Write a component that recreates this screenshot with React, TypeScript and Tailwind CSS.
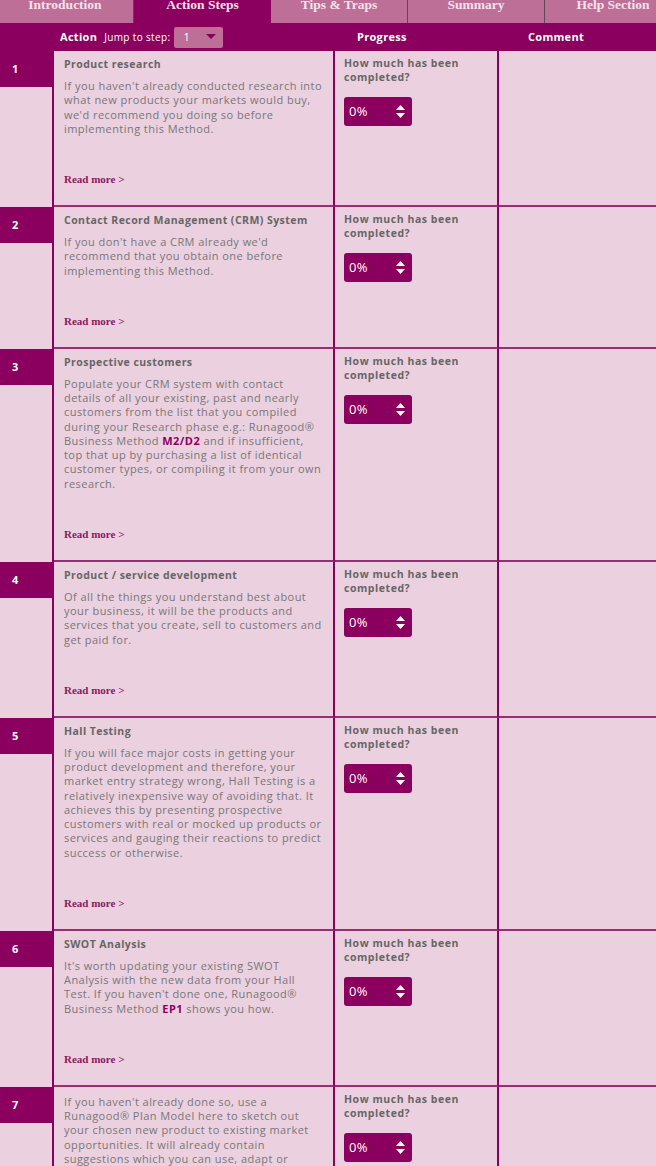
import React from 'react';

const tabs = ['Introduction', 'Action Steps', 'Tips & Traps', 'Summary', 'Help Section'];

type Step = { n: number; title: string; body: React.ReactNode };

const Em = ({ children }: { children: React.ReactNode }) => (
  <span className="font-bold text-[#8b005f]">{children}</span>
);

const steps: Step[] = [
  {
    n: 1,
    title: 'Product research',
    body: "If you haven't already conducted research into what new products your markets would buy, we'd recommend you doing so before implementing this Method.",
  },
  {
    n: 2,
    title: 'Contact Record Management (CRM) System',
    body: "If you don't have a CRM already we'd recommend that you obtain one before implementing this Method.",
  },
  {
    n: 3,
    title: 'Prospective customers',
    body: (
      <>
        Populate your CRM system with contact details of all your existing, past and nearly customers from the list
        that you compiled during your Research phase e.g.: Runagood® Business Method <Em>M2/D2</Em> and if
        insufficient, top that up by purchasing a list of identical customer types, or compiling it from your own
        research.
      </>
    ),
  },
  {
    n: 4,
    title: 'Product / service development',
    body: 'Of all the things you understand best about your business, it will be the products and services that you create, sell to customers and get paid for.',
  },
  {
    n: 5,
    title: 'Hall Testing',
    body: 'If you will face major costs in getting your product development and therefore, your market entry strategy wrong, Hall Testing is a relatively inexpensive way of avoiding that. It achieves this by presenting prospective customers with real or mocked up products or services and gauging their reactions to predict success or otherwise.',
  },
  {
    n: 6,
    title: 'SWOT Analysis',
    body: (
      <>
        It's worth updating your existing SWOT Analysis with the new data from your Hall Test. If you haven't done
        one, Runagood® Business Method <Em>EP1</Em> shows you how.
      </>
    ),
  },
  {
    n: 7,
    title: '',
    body: "If you haven't already done so, use a Runagood® Plan Model here to sketch out your chosen new product to existing market opportunities. It will already contain suggestions which you can use, adapt or replace.",
  },
];

function Spinner() {
  return (
    <div className="mt-[13px] flex h-[29px] w-[68px] items-center justify-between rounded-[3px] bg-[#8b005f] pl-[5px] pr-[6px]">
      <span className="text-[13px] leading-none tracking-[0.3px] text-white">0%</span>
      <svg width="11" height="17" viewBox="0 0 11 17">
        <polygon points="1,7 5.5,2 10,7" fill="white" />
        <polygon points="1,10 10,10 5.5,15" fill="white" />
      </svg>
    </div>
  );
}

function StepRow({ step }: { step: Step }) {
  return (
    <div className="flex">
      <div className="w-[54px] shrink-0 border-r-2 border-[#8b005f]">
        <div className="flex h-[36px] items-center bg-[#8b005f] pl-[12px] text-[11px] font-bold text-white">
          {step.n}
        </div>
      </div>
      <div className="w-[281px] shrink-0 border-b-2 border-r-2 border-r-[#8b005f] border-b-[#9a2c73] pb-[19px] pl-[10px] pr-[10px] pt-[6px]">
        {step.title ? (
          <div className="mb-[8px] text-[10.5px] font-bold leading-[14px] tracking-[0.45px] text-[#666]">
            {step.title}
          </div>
        ) : (
          <div className="h-[2px]" />
        )}
        <p className="text-[11px] leading-[14.25px] tracking-[0.45px] text-[#777]">{step.body}</p>
        <a className="mt-[36px] block font-['Liberation_Serif',serif] text-[11px] font-bold leading-[14px] text-[#8b1a60]">
          Read more &gt;
        </a>
      </div>
      <div className="w-[164px] shrink-0 border-b-2 border-r-2 border-r-[#8b005f] border-b-[#9a2c73] pl-[9px] pt-[5px]">
        <div className="text-[10.5px] font-bold leading-[14px] tracking-[0.55px] text-[#666]">
          How much has been
          <br />
          completed?
        </div>
        <Spinner />
      </div>
      <div className="flex-1 border-b-2 border-[#9a2c73]" />
    </div>
  );
}

export default function App() {
  return (
    <div className="min-h-screen overflow-hidden bg-[#ebd0df] font-['Open_Sans',sans-serif]">
      <nav className="-ml-[3px] flex h-[23px] bg-[#bd6f98]">
        {tabs.map((t, i) => (
          <div
            key={t}
            className={
              i === 1
                ? 'w-[137px] shrink-0 overflow-hidden bg-[#8b005f] text-center'
                : 'w-[137px] shrink-0 overflow-hidden border-r border-[#5a4a52] bg-[#bd6f98] text-center'
            }
          >
            <span className="-mt-[3px] block font-['Liberation_Serif',serif] text-[13.5px] font-bold leading-[16px] text-[#f5e1ec]">
              {t}
            </span>
          </div>
        ))}
      </nav>

      <header className="flex h-[28px] items-center bg-[#8b005f] text-white">
        <div className="w-[54px] shrink-0" />
        <div className="flex w-[281px] shrink-0 items-center pl-[6px]">
          <span className="text-[11px] font-bold tracking-[0.3px]">Action</span>
          <span className="ml-[7px] text-[10px] tracking-[0.35px]">Jump to step:</span>
          <div className="ml-[4px] flex h-[21px] w-[49px] items-center justify-between rounded-[2px] bg-[#bd6f98] pl-[9px] pr-[7px]">
            <span className="text-[11px] text-white">1</span>
            <svg width="10" height="6" viewBox="0 0 10 6">
              <polygon points="0,0 10,0 5,5" fill="#8b005f" />
            </svg>
          </div>
        </div>
        <div className="w-[164px] shrink-0 pl-[22px] text-[11px] font-bold tracking-[0.3px]">Progress</div>
        <div className="flex-1 pl-[29px] text-[11px] font-bold tracking-[0.3px]">Comment</div>
      </header>

      {steps.map((s) => (
        <StepRow key={s.n} step={s} />
      ))}
    </div>
  );
}
